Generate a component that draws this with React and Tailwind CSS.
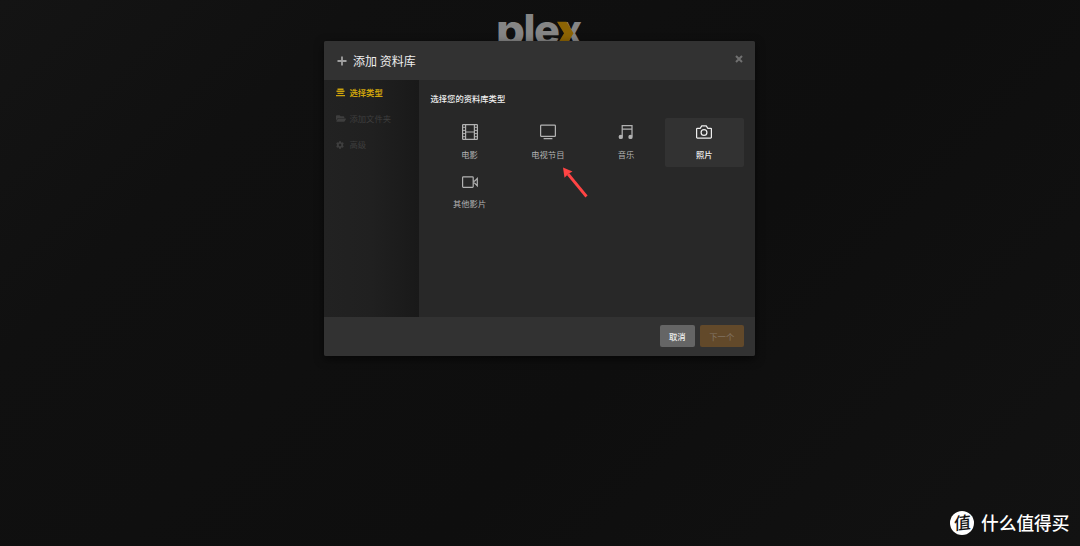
import React from 'react'
import clsx from 'clsx'
import { FaFolderOpen, FaCog } from 'react-icons/fa'

function FilmIcon() {
  return (
    <svg viewBox="0 0 16 16" className="w-4 h-4" fill="none" stroke="currentColor">
      <rect x="0.6" y="0.6" width="14.8" height="14.8" rx="0.6" strokeWidth="1.2" />
      <path d="M3.6 .6v14.8M12.4 .6v14.8M3.6 8h8.8" strokeWidth="1.2" />
      <path d="M.6 3.3h3M.6 6.4h3M.6 9.6h3M.6 12.7h3M12.4 3.3h3M12.4 6.4h3M12.4 9.6h3M12.4 12.7h3" strokeWidth="1" />
    </svg>
  )
}

function TvIcon() {
  return (
    <svg viewBox="0 0 16 16" className="w-4 h-4" fill="none" stroke="currentColor" strokeWidth="1.25">
      <rect x="0.6" y="1.2" width="14.8" height="11.2" rx="0.8" />
      <path d="M3.6 14.7h8.8" />
    </svg>
  )
}

function MusicIcon() {
  return (
    <svg viewBox="0 0 16 16" className="w-4 h-4" fill="none" stroke="currentColor" strokeWidth="1.25">
      <path d="M4.2 12.6V1.5h9.8v11.1M4.2 5h9.8" />
      <circle cx="2.8" cy="12.9" r="2.2" fill="currentColor" stroke="none" />
      <circle cx="12.5" cy="12.9" r="2.2" fill="currentColor" stroke="none" />
    </svg>
  )
}

function CameraIcon() {
  return (
    <svg viewBox="0 0 16 16" className="w-4 h-4" fill="none" stroke="currentColor" strokeWidth="1.25">
      <path d="M1.4 4.3h2.7l1.7-2.4h4.4l1.7 2.4h2.7a.8.8 0 0 1 .8.8v8.1a.8.8 0 0 1-.8.8H1.4a.8.8 0 0 1-.8-.8V5.1a.8.8 0 0 1 .8-.8z" />
      <circle cx="8" cy="8.5" r="2.9" />
    </svg>
  )
}

function VideoIcon() {
  return (
    <svg viewBox="0 0 16 16" className="w-4 h-4" fill="none" stroke="currentColor" strokeWidth="1.2">
      <rect x="0.6" y="2.8" width="10.6" height="10.6" rx="0.8" />
      <path d="M11.2 7.2h1.4l2.7-2.7v7.2l-2.7-2.7h-1.4" />
    </svg>
  )
}

const steps = [
  { label: '选择类型', active: true },
  { label: '添加文件夹', icon: <FaFolderOpen className="w-[10px] h-[9px]" /> },
  { label: '高级', icon: <FaCog className="w-[8px] h-[8px]" /> },
]

const types = [
  { label: '电影', icon: <FilmIcon /> },
  { label: '电视节目', icon: <TvIcon /> },
  { label: '音乐', icon: <MusicIcon /> },
  { label: '照片', icon: <CameraIcon />, selected: true },
  { label: '其他影片', icon: <VideoIcon /> },
]

function PlexLogo() {
  return (
    <svg
      viewBox="0 0 90 50"
      className="absolute left-[495px] top-0 w-[90px] h-[50px]"
      fill="#858585"
      fontFamily="Inter, sans-serif"
      fontWeight="800"
      fontSize="42"
    >
      <text x="1" y="44.8" textLength="29" lengthAdjust="spacingAndGlyphs">p</text>
      <text x="28.5" y="44.8" textLength="12" lengthAdjust="spacingAndGlyphs">l</text>
      <text x="39" y="44.8" textLength="26" lengthAdjust="spacingAndGlyphs">e</text>
      <text x="65" y="44.8" textLength="22" lengthAdjust="spacingAndGlyphs">x</text>
      <path d="M62 21.8h9.5l7 11.5-7 11.5h-9.5l7-11.5z" fill="#8d6404" />
    </svg>
  )
}

function Sidebar() {
  return (
    <aside className="w-[94.5px] shrink-0 pl-[11.5px] bg-linear-to-r from-[#222222] via-[#202020] to-[#191919]">
      {steps.map((step) => (
        <div
          key={step.label}
          className={clsx(
            'flex items-center h-[26px] text-[8.3px]',
            step.active ? 'text-[#cca20c] font-bold' : 'text-[#3e3e3e]'
          )}
        >
          <span className="w-[14px] flex items-center">
            {step.icon || (
              <svg viewBox="0 0 9 9" className="w-[9px] h-[9px]" stroke="currentColor" strokeWidth="1.4">
                <path d="M1.5 1.2h6M.5 3.3h8M1.5 5.4h6M0 7.6h9" />
              </svg>
            )}
          </span>
          {step.label}
        </div>
      ))}
    </aside>
  )
}

function AddLibraryModal() {
  return (
    <div className="w-[431px] h-[315px] mt-[41px] mr-px flex flex-col rounded-[2px] overflow-hidden bg-[#282828] shadow-[0_3px_10px_rgba(0,0,0,0.6)] relative">
      <header className="h-[38.5px] shrink-0 flex items-center pl-[12.5px] pr-3 bg-[#323232]">
        <svg viewBox="0 0 10 10" className="w-[10px] h-[10px] mt-px mr-[6.5px] text-[#a0a0a0]" stroke="currentColor" strokeWidth="1.8">
          <path d="M5 .5v9M.5 5h9" />
        </svg>
        <h1 className="text-[12px] leading-[18px] pt-[2px] text-[#eeeeee]">添加 资料库</h1>
        <svg viewBox="0 0 8 8" className="w-2 h-2 ml-auto mb-[3px] text-[#707070]" stroke="currentColor" strokeWidth="2">
          <path d="M1 1l6 6M7 1l-6 6" />
        </svg>
      </header>

      <div className="flex flex-1 min-h-0">
        <Sidebar />
        <main className="flex-1 pl-[12px] pr-[11.5px] pt-[12.5px]">
          <h2 className="text-[8.3px] leading-[13px] font-medium text-[#eeeeee]">选择您的资料库类型</h2>
          <div className="grid grid-cols-4 mt-[12.5px]">
            {types.map((type) => (
              <button
                key={type.label}
                className={clsx(
                  'h-[49.5px] flex flex-col items-center pt-[6.5px] rounded-[2px]',
                  type.selected ? 'bg-[#323232] text-[#eeeeee] font-medium' : 'text-[#b2b2b2]'
                )}
              >
                {type.icon}
                <span className="mt-[7.5px] text-[8.3px] leading-[13px]">{type.label}</span>
              </button>
            ))}
          </div>
        </main>
      </div>

      <footer className="h-[39.5px] shrink-0 flex items-center justify-end gap-[5px] pr-[11.5px] pb-px bg-[#323232] text-[8.3px]">
        <button className="w-[35.5px] h-[21.5px] rounded-[2px] bg-[#656565] text-[#eeeeee] font-medium">取消</button>
        <button className="w-[43.5px] h-[21.5px] rounded-[2px] bg-[#62492a] text-[#827566]">下一个</button>
      </footer>
    </div>
  )
}

function Watermark() {
  return (
    <div className="absolute right-[10.5px] bottom-[11px] flex items-center gap-[7px] text-white">
      <span className="w-6 h-6 rounded-full bg-white text-[#111111] text-[17px] leading-6 font-medium flex items-center justify-center">
        <span className="-skew-x-6 -rotate-6 -mt-[2px]">值</span>
      </span>
      <span className="text-[17.7px] leading-6 -mt-[2px] font-medium">什么值得买</span>
    </div>
  )
}

export default function App() {
  return (
    <div
      lang="zh-CN"
      className="relative w-[1080px] h-[546px] overflow-hidden flex justify-center items-start bg-linear-[135deg,#141414_0%,#101010_22%,#0e0e0e_60%,#121212_100%] font-['Noto_Sans_CJK_SC',sans-serif]"
    >
      <PlexLogo />
      <AddLibraryModal />
      {/* pointer to the TV shows tile */}
      <svg viewBox="0 0 26 32" className="absolute left-[562px] top-[167px] w-[26px] h-8">
        <path d="M6 7l18.5 22.5" stroke="#ff4444" strokeWidth="2.8" />
        <path d="M1 .5l9.5 4-4 2.2-4 4z" fill="#ff4444" />
      </svg>
      <Watermark />
    </div>
  )
}
